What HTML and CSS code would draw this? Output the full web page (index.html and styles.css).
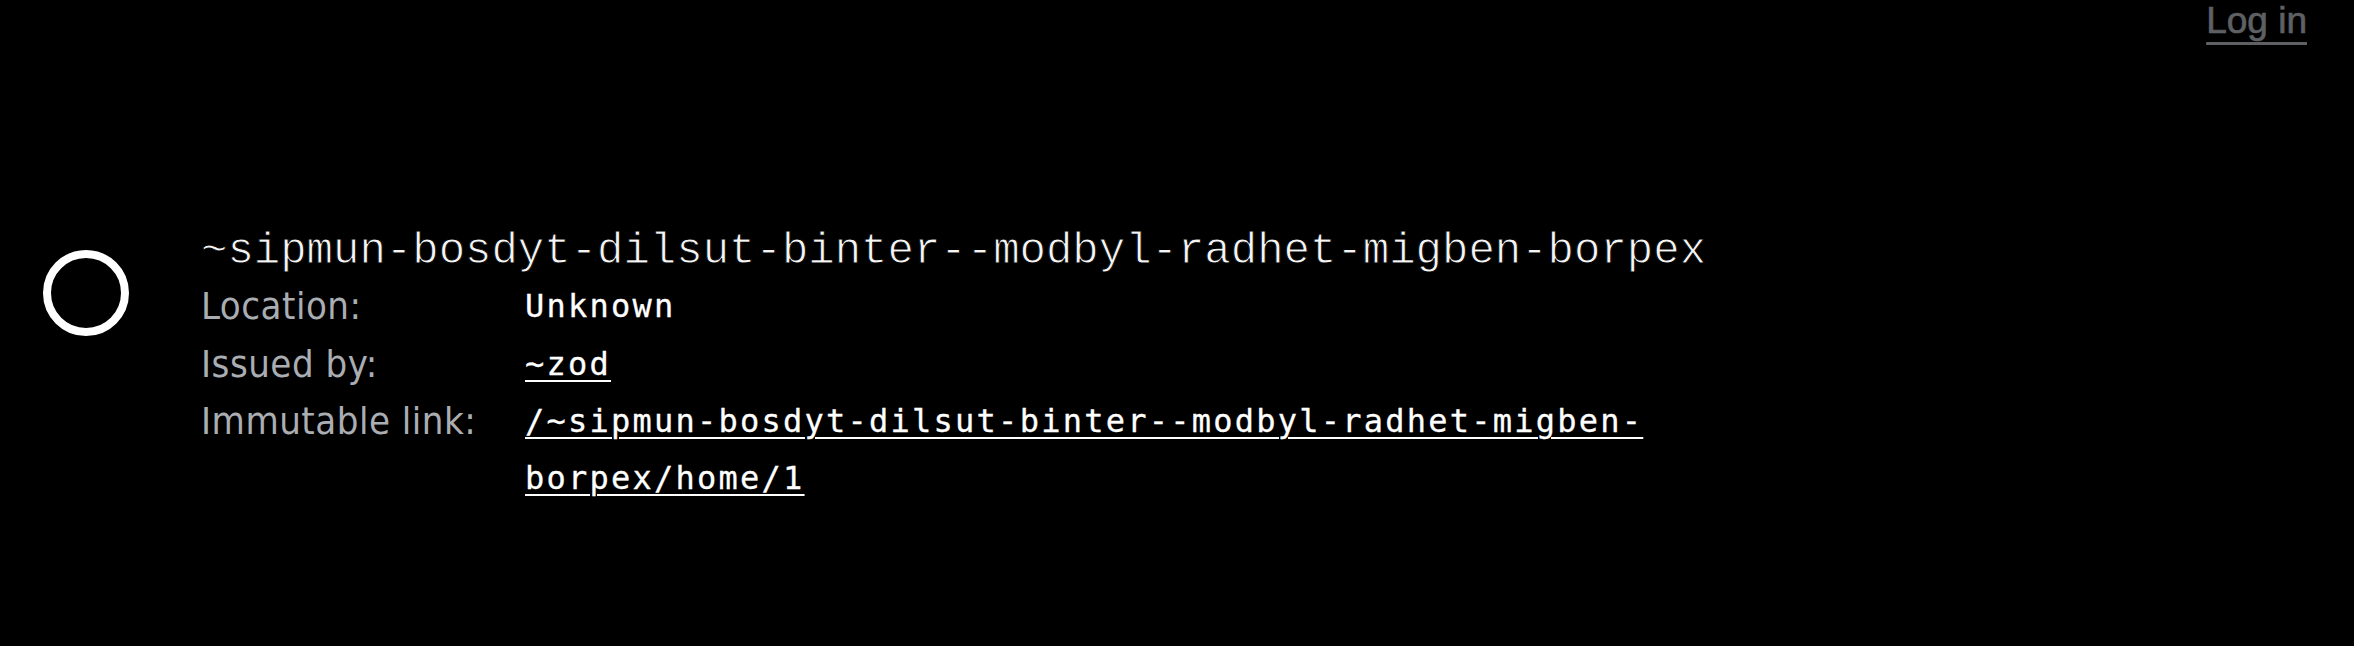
FILE: index.html
```html
<!DOCTYPE html>
<html lang="en">
<head>
<meta charset="utf-8">
<title>~sipmun-bosdyt-dilsut-binter--modbyl-radhet-migben-borpex</title>
<link rel="stylesheet" href="styles.css">
</head>
<body>
  <header class="topbar">
    <a class="login" href="#">Log in</a>
  </header>
  <main class="identity">
    <div class="sigil"></div>
    <div class="details">
      <h1 class="ship">~sipmun-bosdyt-dilsut-binter--modbyl-radhet-migben-borpex</h1>
      <dl class="facts">
        <dt class="label">Location:</dt>
        <dd class="value">Unknown</dd>
        <dt class="label">Issued by:</dt>
        <dd class="value"><a class="link" href="#">~zod</a></dd>
        <dt class="label">Immutable link:</dt>
        <dd class="value"><a class="link" href="#">/~sipmun-bosdyt-dilsut-binter--modbyl-radhet-migben-borpex/home/1</a></dd>
      </dl>
    </div>
  </main>
</body>
</html>
```
FILE: styles.css
```css
html, body {
  margin: 0;
  padding: 0;
  background: #000;
}

body {
  width: 2354px;
  height: 646px;
  overflow: hidden;
  color: #fff;
  font-family: "Liberation Sans", Arial, sans-serif;
}

.topbar {
  height: 50px;
  display: flex;
  justify-content: flex-end;
  align-items: flex-start;
  padding: 2px 47px 0 0;
  box-sizing: border-box;
}

.login {
  font-family: "Liberation Sans", Arial, sans-serif;
  font-size: 37px;
  line-height: 37px;
  color: #5f6063;
  -webkit-text-stroke: 0.7px #5f6063;
  text-decoration: underline;
  text-decoration-thickness: 3px;
  text-underline-offset: 9px;
}

.identity {
  display: flex;
  align-items: flex-start;
  gap: 72px;
  padding: 175px 0 0 43px;
}

.sigil {
  width: 86px;
  height: 86px;
  box-sizing: border-box;
  border: 8px solid #fff;
  border-radius: 50%;
  margin-top: 25px;
  flex: none;
}

.details {
  display: flex;
  flex-direction: column;
}

.ship {
  margin: 0;
  font-family: "Liberation Mono", "DejaVu Sans Mono", monospace;
  font-weight: 400;
  font-size: 44px;
  line-height: 53px;
  color: #f5f5f5;
  -webkit-text-stroke: 0.9px #000;
  white-space: nowrap;
}

.facts {
  margin: 0;
  display: grid;
  grid-template-columns: 324px 1132px;
  align-items: start;
}

.label {
  margin: 0;
  font-family: "DejaVu Sans Condensed", "DejaVu Sans", sans-serif;
  font-stretch: condensed;
  font-size: 38px;
  letter-spacing: 0.5px;
  line-height: 57.5px;
  color: #aaadb2;
  white-space: nowrap;
}

.value {
  margin: 0;
  font-family: "DejaVu Sans Mono", "Liberation Mono", monospace;
  font-size: 32px;
  letter-spacing: 2.24px;
  line-height: 57px;
  color: #fff;
  -webkit-text-stroke: 0.3px #fff;
}

.link {
  color: #fff;
  text-decoration: underline;
  text-decoration-thickness: 2px;
  text-underline-offset: 5px;
}
```
